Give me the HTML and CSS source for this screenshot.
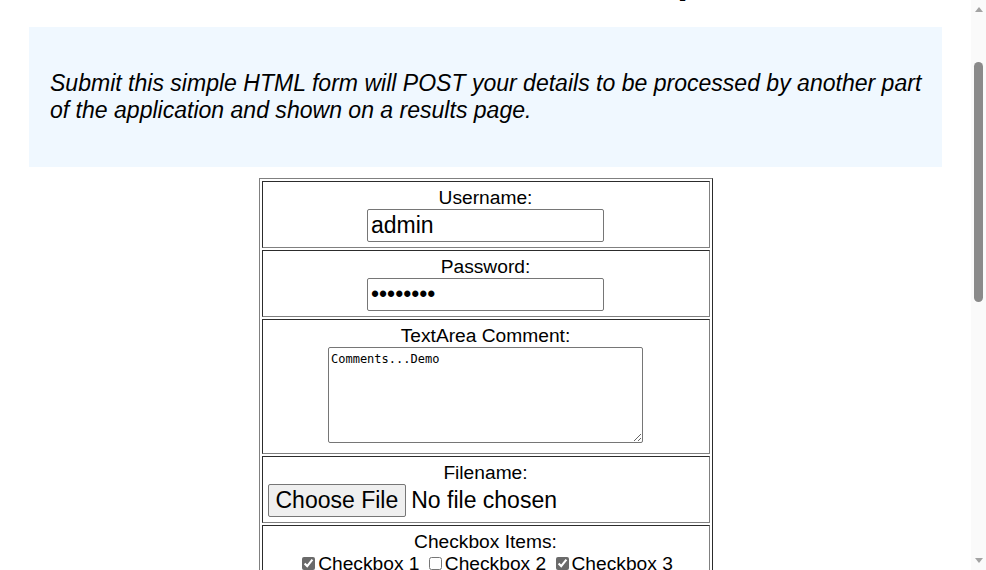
FILE: index.html
```html
<!DOCTYPE html>
<html lang="en">
<head>
<meta charset="utf-8">
<title>Basic HTML Form Example</title>
<link rel="stylesheet" href="styles.css">
</head>
<body>
<div class="viewport">
  <div class="page">
    <h1 class="title">Basic HTML Form Example</h1>
    <div class="explanation">
      <p>Submit this simple HTML form will POST your details to be processed by another part of the application and shown on a results page.</p>
    </div>
    <form class="form" action="#" method="post">
      <table class="form-table">
        <tr><td>Username:<br><input type="text" class="field" name="username" value="admin"></td></tr>
        <tr><td>Password:<br><input type="password" class="field" name="password" value="password"></td></tr>
        <tr><td>TextArea Comment:<br><textarea class="comment" name="comments">Comments...Demo</textarea></td></tr>
        <tr><td>Filename:<br><input type="file" class="file-field" name="filename"></td></tr>
        <tr><td>Checkbox Items:<br><label><input type="checkbox" class="check" checked>Checkbox 1</label> <label><input type="checkbox" class="check">Checkbox 2</label> <label><input type="checkbox" class="check" checked>Checkbox 3</label></td></tr>
        <tr><td>Radio Items:<br><label><input type="radio" class="check" name="radio">Radio 1</label> <label><input type="radio" class="check" name="radio" checked>Radio 2</label> <label><input type="radio" class="check" name="radio">Radio 3</label></td></tr>
        <tr><td>Multiple Select Values:<br><select class="multi" multiple><option>Selection Item 1</option><option>Selection Item 2</option><option>Selection Item 3</option><option selected>Selection Item 4</option></select></td></tr>
        <tr><td>Dropdown:<br><select class="drop"><option>Drop Down Item 1</option><option selected>Drop Down Item 3</option></select></td></tr>
        <tr><td><input type="reset" class="btn" value="cancel"> <input type="submit" class="btn" value="submit"></td></tr>
      </table>
    </form>
  </div>
</div>
<div class="scrollbar" aria-hidden="true">
  <div class="sb-button"><span class="sb-arrow sb-up"></span></div>
  <div class="sb-track"><span class="sb-thumb"></span></div>
  <div class="sb-button"><span class="sb-arrow sb-down"></span></div>
</div>
<script src="script.js"></script>
</body>
</html>
```

FILE: styles.css
```css
html, body {
  margin: 0;
  padding: 0;
}
body {
  display: flex;
  height: 570px;
  overflow: hidden;
  background: #ffffff;
  color: #000000;
  font-family: "Liberation Sans", Arial, sans-serif;
}
.viewport {
  flex: 1;
  overflow: hidden;
  height: 570px;
}
.page {
  padding: 8px;
  font-size: 19.2px;
}
.title {
  font-size: 38.4px;
  line-height: 44px;
  font-weight: bold;
  text-align: center;
  margin: 26px 0 25px;
}
.explanation {
  background: #f0f8ff;
  margin: 0 21px 11px;
  padding: 20px 20px 20px 21px;
}
.explanation p {
  margin: 23px 0;
  font-size: 23.04px;
  font-style: italic;
}
.form {
  margin: 0;
}
.form-table {
  margin: 0 auto;
  border: 1px outset gray;
  border-spacing: 2px;
}
.form-table td {
  border: 1px inset gray;
  padding: 5px;
  text-align: center;
}
.field {
  box-sizing: border-box;
  width: 237px;
  height: 33px;
  font: 23px "Liberation Sans", Arial, sans-serif;
  padding: 1px 3px;
  border: 1px solid #767676;
  border-radius: 2px;
  color: #000;
}
.comment {
  box-sizing: border-box;
  width: 315px;
  height: 96px;
  font: 12px "DejaVu Sans Mono", "Liberation Mono", monospace;
  padding: 4px 2px 2px;
  border: 1px solid #767676;
  border-radius: 2px;
}
.file-field {
  width: 436px;
  font: 23px "Liberation Sans", Arial, sans-serif;
  text-align: left;
}
.file-field::file-selector-button {
  font: inherit;
  height: 33px;
  padding: 1px 7px;
  margin-right: 5px;
  border: 1px solid #767676;
  border-radius: 2px;
  background: #efefef;
  color: #000;
}
.check {
  accent-color: #6a6a6a;
  margin: 3px 3px 3px 4px;
}
.multi, .drop, .btn {
  font: 19.2px "Liberation Sans", Arial, sans-serif;
}
.scrollbar {
  width: 15px;
  height: 570px;
  flex: none;
  background: #fafafa;
  display: flex;
  flex-direction: column;
}
.sb-button {
  height: 17px;
  display: flex;
  align-items: center;
  justify-content: center;
  flex: none;
}
.sb-arrow {
  width: 0;
  height: 0;
  border-left: 4px solid transparent;
  border-right: 4px solid transparent;
}
.sb-up {
  border-bottom: 5px solid #a3a3a3;
  margin-top: 2px;
}
.sb-down {
  border-top: 5px solid #a3a3a3;
  margin-bottom: 2px;
}
.sb-track {
  flex: 1;
  display: flex;
  flex-direction: column;
  align-items: center;
}
.sb-thumb {
  width: 9px;
  height: 240px;
  margin-top: 45px;
  background: #8a8a8a;
  border-radius: 5px;
}
```

FILE: script.js
```js
document.querySelector('.viewport').scrollTop = 76;
```
